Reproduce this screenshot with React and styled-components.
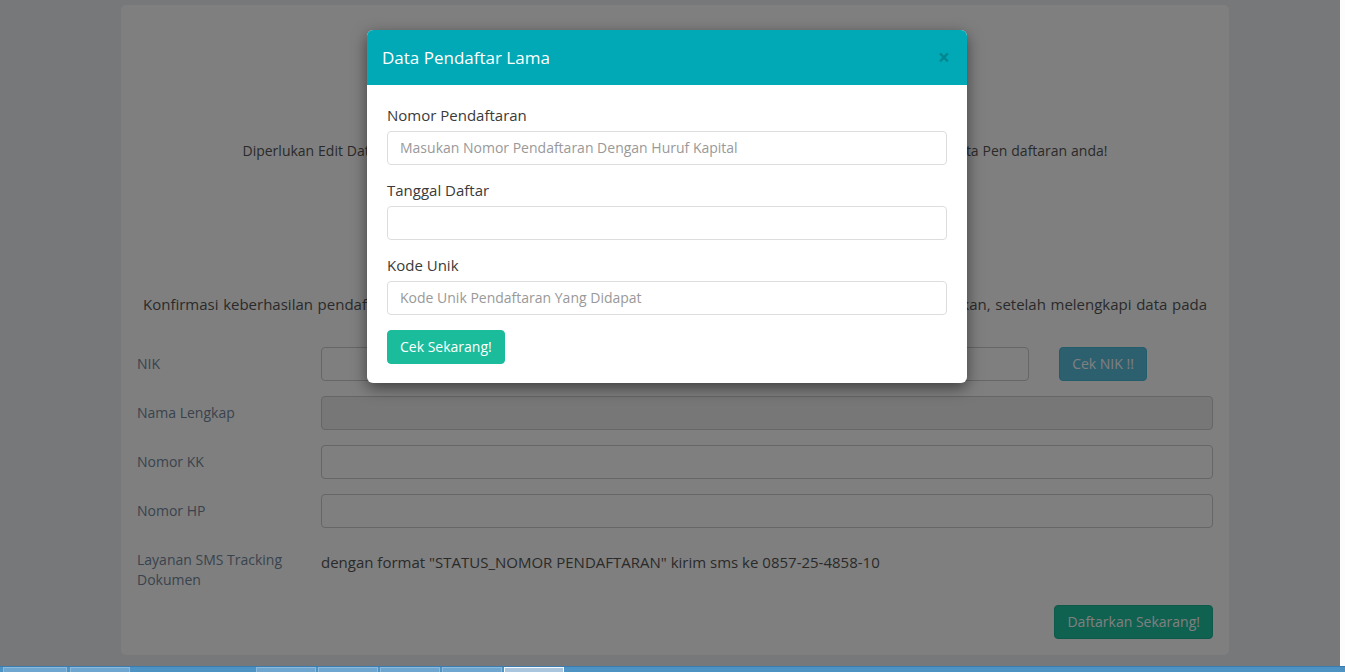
import React from "react";
import styled, { createGlobalStyle } from "styled-components";

const GlobalStyle = createGlobalStyle`
  * { box-sizing: border-box; }
  html, body {
    margin: 0;
    padding: 0;
    width: 1345px;
    height: 672px;
    overflow: hidden;
    font-family: "Open Sans", "Liberation Sans", sans-serif;
  }
`;

const Screen = styled.div`
  display: flex;
  flex-direction: column;
  width: 1345px;
  height: 672px;
`;

const Main = styled.div`
  display: flex;
  height: 666px;
`;

const Page = styled.div`
  position: relative;
  flex: 1;
  background: #eef0f4;
  padding: 5px 0 0 121px;
`;

const ScrollStrip = styled.div`
  width: 5px;
  background: #fdfdfd;
`;

const Card = styled.div`
  width: 1108px;
  height: 650px;
  background: #fff;
  border-radius: 5px;
  padding: 136px 16px 0;
`;

const Intro = styled.p`
  width: 865px;
  margin: 0 auto;
  font-size: 14px;
  line-height: 20px;
  color: #555;
  text-align: justify;
  text-align-last: justify;
`;

const Lead = styled.div`
  margin: 133px 6px 0;
  font-size: 15px;
  line-height: 20px;
  color: #555;
  text-align: center;
`;

const JustLine = styled.span`
  display: block;
  text-align: justify;
  text-align-last: justify;
`;

const Form = styled.div`
  margin-top: 13px;
  display: flex;
  flex-direction: column;
  gap: 15px;
`;

const Row = styled.div`
  display: grid;
  grid-template-columns: 184px 1fr;
  align-items: ${(p) => (p.top ? "start" : "center")};
  margin-top: ${(p) => p.gapTop || 0}px;
`;

const Label = styled.div`
  font-size: 14px;
  line-height: 20px;
  color: #73879c;
`;

const Field = styled.div`
  height: 34px;
  border: 1px solid #ccc;
  border-radius: 4px;
  background: ${(p) => (p.disabled ? "#eee" : "#fff")};
`;

const NikGroup = styled.div`
  display: grid;
  grid-template-columns: 1fr 88px;
  gap: 30px;
  padding-right: 66px;
`;

const Btn = styled.button`
  height: 34px;
  padding: 6px 12px;
  border: 1px solid ${(p) => p.border};
  border-radius: 4px;
  background: ${(p) => p.bg};
  color: #fff;
  font-family: inherit;
  font-size: 14px;
  line-height: 20px;
  white-space: nowrap;
`;

const SmsText = styled.div`
  font-size: 15px;
  line-height: 20px;
  color: #555;
  padding-top: 2px;
`;

const Actions = styled.div`
  display: flex;
  justify-content: flex-end;
`;

/* modal */
const Backdrop = styled.div`
  position: absolute;
  inset: 0;
  background: rgba(0, 0, 0, 0.5);
  display: flex;
  justify-content: center;
  align-items: flex-start;
  padding: 30px 6px 0 0;
`;

const Modal = styled.div`
  width: 600px;
  background: #fff;
  border-radius: 6px;
  overflow: hidden;
  box-shadow: 0 5px 15px rgba(0, 0, 0, 0.5);
`;

const ModalHeader = styled.div`
  display: flex;
  align-items: center;
  justify-content: space-between;
  height: 55px;
  padding: 0 15px;
  background: #00a9b5;
`;

const ModalTitle = styled.h4`
  margin: 0;
  font-size: 17px;
  font-weight: 400;
  color: #fff;
  line-height: 25px;
`;

const Close = styled.span`
  font-size: 21px;
  font-weight: 700;
  line-height: 1;
  color: #000;
  opacity: 0.2;
  padding-right: 2px;
`;

const ModalBody = styled.div`
  padding: 20px 20px 19px;
`;

const Group = styled.div`
  margin-bottom: 15px;
`;

const ModalLabel = styled.label`
  display: block;
  margin-bottom: 5px;
  font-size: 15px;
  line-height: 21px;
  color: #3a3a3a;
`;

const Input = styled.div`
  height: 34px;
  padding: 0 12px;
  border: 1px solid #ddd;
  border-radius: 4px;
  font-size: 14px;
  line-height: 32px;
  color: #999;
`;

/* taskbar */
const Taskbar = styled.div`
  display: flex;
  gap: 2px;
  height: 6px;
  padding-left: 3px;
  background: #4c93c4;
  border-top: 1px solid #3a7bb0;
`;

const TaskItem = styled.div`
  width: ${(p) => p.w}px;
  margin-left: ${(p) => p.ml || 0}px;
  background: ${(p) => (p.active ? "#a9c6de" : "#6fa6cf")};
  border: 1px solid ${(p) => (p.active ? "#f4f8fb" : "#8dbadb")};
  border-bottom: none;
`;

const taskItems = [
  { w: 64 },
  { w: 60, ml: 1 },
  { w: 60, ml: 124 },
  { w: 60 },
  { w: 60 },
  { w: 60 },
  { w: 60, active: true },
];

export default function App() {
  return (
    <>
      <GlobalStyle />
      <Screen>
        <Main>
          <Page>
            <Card>
              <Intro>
                Diperlukan Edit Data? Silahkan klik tombol di bawah ini kemudian isi Nomor dan Kode Unik untuk merubah Data Pen daftaran anda!
              </Intro>

              <Lead>
                <JustLine>
                  Konfirmasi keberhasilan pendaftaran akan dikirimkan melalui SMS ke nomor HP anda dan akan segera dikonfirmasikan, setelah melengkapi data pada
                </JustLine>
                <span>form di bawah ini.</span>
              </Lead>

              <Form>
                <Row>
                  <Label>NIK</Label>
                  <NikGroup>
                    <Field />
                    <Btn bg="#5bc0de" border="#46b8da">Cek NIK !!</Btn>
                  </NikGroup>
                </Row>
                <Row>
                  <Label>Nama Lengkap</Label>
                  <Field disabled />
                </Row>
                <Row>
                  <Label>Nomor KK</Label>
                  <Field />
                </Row>
                <Row>
                  <Label>Nomor HP</Label>
                  <Field />
                </Row>
                <Row top gapTop={7}>
                  <Label>
                    Layanan SMS Tracking
                    <br />
                    Dokumen
                  </Label>
                  <SmsText>
                    dengan format "STATUS_NOMOR PENDAFTARAN" kirim sms ke 0857-25-4858-10
                  </SmsText>
                </Row>
                <Actions>
                  <Btn bg="#1ec2a0" border="#1ab294">Daftarkan Sekarang!</Btn>
                </Actions>
              </Form>
            </Card>

            <Backdrop>
              <Modal>
                <ModalHeader>
                  <ModalTitle>Data Pendaftar Lama</ModalTitle>
                  <Close>×</Close>
                </ModalHeader>
                <ModalBody>
                  <Group>
                    <ModalLabel>Nomor Pendaftaran</ModalLabel>
                    <Input>Masukan Nomor Pendaftaran Dengan Huruf Kapital</Input>
                  </Group>
                  <Group>
                    <ModalLabel>Tanggal Daftar</ModalLabel>
                    <Input />
                  </Group>
                  <Group>
                    <ModalLabel>Kode Unik</ModalLabel>
                    <Input>Kode Unik Pendaftaran Yang Didapat</Input>
                  </Group>
                  <Btn bg="#1abc9c" border="#1abc9c">Cek Sekarang!</Btn>
                </ModalBody>
              </Modal>
            </Backdrop>
          </Page>
          <ScrollStrip />
        </Main>
        <Taskbar>
          {taskItems.map((t, i) => (
            <TaskItem key={i} {...t} />
          ))}
        </Taskbar>
      </Screen>
    </>
  );
}
